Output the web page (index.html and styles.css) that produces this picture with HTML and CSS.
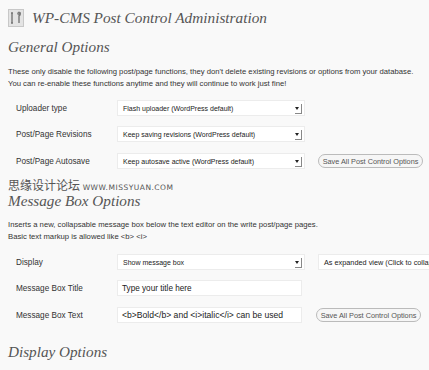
FILE: index.html
```html
<!DOCTYPE html>
<html>
<head>
<meta charset="utf-8">
<link rel="stylesheet" href="styles.css">
</head>
<body>
<div class="page">
  <div class="title-row">
    <span class="icon"><svg width="16" height="18" viewBox="0 0 16 18"><rect x="0.5" y="0.5" width="15" height="17" fill="#e4e4e4" stroke="#c8c8c8"/><path d="M4 4 L4 14 M3 4 L5 4 M3 14 L5 14" stroke="#777" stroke-width="1.4" fill="none"/><path d="M10 4 L12 4 L12 6 L11 7 L11 14" stroke="#777" stroke-width="1.4" fill="none"/><circle cx="11" cy="4.5" r="1.4" fill="none" stroke="#777"/></svg></span>
    <h1 class="title">WP-CMS Post Control Administration</h1>
  </div>

  <h2 class="section">General Options</h2>
  <p class="desc">These only disable the following post/page functions, they don't delete existing revisions or options from your database.<br>You can re-enable these functions anytime and they will continue to work just fine!</p>

  <div class="form">
    <div class="row">
      <span class="label">Uploader type</span>
      <span class="select">Flash uploader (WordPress default)<i class="arrow"></i></span>
    </div>
    <div class="row">
      <span class="label">Post/Page Revisions</span>
      <span class="select">Keep saving revisions (WordPress default)<i class="arrow"></i></span>
    </div>
    <div class="row">
      <span class="label">Post/Page Autosave</span>
      <span class="select">Keep autosave active (WordPress default)<i class="arrow"></i></span>
      <span class="button">Save All Post Control Options</span>
    </div>
  </div>

  <div class="watermark">思缘设计论坛 <span class="wm-url">WWW.MISSYUAN.COM</span></div>
  <h2 class="section section-mb">Message Box Options</h2>
  <p class="desc desc-mb">Inserts a new, collapsable message box below the text editor on the write post/page pages.<br>Basic text markup is allowed like &lt;b&gt; &lt;i&gt;</p>

  <div class="form form-mb">
    <div class="row">
      <span class="label">Display</span>
      <span class="select">Show message box<i class="arrow"></i></span>
      <span class="select select2">As expanded view (Click to collapse)</span>
    </div>
    <div class="row">
      <span class="label">Message Box Title</span>
      <span class="input">Type your title here</span>
    </div>
    <div class="row">
      <span class="label">Message Box Text</span>
      <span class="input input-code">&lt;b&gt;Bold&lt;/b&gt; and &lt;i&gt;italic&lt;/i&gt; can be used</span>
      <span class="button">Save All Post Control Options</span>
    </div>
  </div>

  <h2 class="section section-do">Display Options</h2>
</div>
</body>
</html>
```

FILE: styles.css
```css
html, body {
  margin: 0;
  padding: 0;
  background: #f9f9f9;
}
body {
  width: 429px;
  height: 370px;
  overflow: hidden;
  font-family: "Liberation Sans", Arial, sans-serif;
  color: #333;
}
.page {
  padding: 8px 0 0 8px;
  white-space: nowrap;
}
.title-row {
  display: flex;
  align-items: center;
  gap: 8px;
  height: 19px;
}
.icon {
  display: flex;
  width: 16px;
  height: 18px;
}
.title {
  margin: 0;
  font-family: "Liberation Serif", serif;
  font-style: italic;
  font-weight: normal;
  font-size: 15.3px;
  color: #555;
}
.section {
  margin: 11px 0 0 0;
  font-family: "Liberation Serif", serif;
  font-style: italic;
  font-weight: normal;
  font-size: 15.2px;
  line-height: 18px;
  color: #555;
}
.desc {
  margin: 10px 0 0 0;
  font-size: 7.7px;
  line-height: 12px;
  color: #333;
}
.desc-mb {
  margin-top: 9px;
}
.form {
  margin-top: 10px;
  display: flex;
  flex-direction: column;
  gap: 10px;
}
.form-mb {
  margin-top: 11px;
}
.row {
  display: flex;
  align-items: center;
  height: 16px;
  padding-left: 8px;
}
.row > * {
  flex-shrink: 0;
}
.form > .row:nth-child(3) {
  margin-top: 1px;
}
.label {
  width: 101px;
  font-size: 8.2px;
  color: #333;
}
.select, .input {
  position: relative;
  box-sizing: border-box;
  width: 188px;
  height: 16px;
  display: flex;
  align-items: center;
  padding-left: 5px;
  background: #fff;
  border: 1px solid #ececec;
  font-size: 7px;
  color: #222;
}
.input {
  width: 185px;
  padding-left: 4px;
  font-size: 8.2px;
}
.input-code {
  font-size: 8.6px;
}
.arrow {
  position: absolute;
  right: 2px;
  top: 3px;
  width: 6px;
  height: 9px;
  border-right: 1px solid #888;
  border-bottom: 1px solid #888;
}
.arrow::before {
  content: "";
  position: absolute;
  left: 0;
  top: 3px;
  border-left: 2.5px solid transparent;
  border-right: 2.5px solid transparent;
  border-top: 3px solid #222;
}
.select2 {
  margin-left: 13px;
  width: 130px;
  font-size: 7.3px;
}
.button {
  box-sizing: border-box;
  margin-left: 13px;
  height: 14px;
  width: 105px;
  justify-content: center;
  display: flex;
  align-items: center;
  border: 1px solid #bbb;
  border-radius: 8px;
  background: #f6f6f6;
  font-size: 7.3px;
  color: #555;
}
.input + .button {
  margin-left: 14px;
}
.watermark {
  margin-top: 10px;
  font-family: "Noto Sans CJK SC", sans-serif;
  font-size: 12px;
  line-height: 12px;
  color: #555;
}
.wm-url {
  font-family: "DejaVu Sans", sans-serif;
  font-size: 7.5px;
  letter-spacing: 0.5px;
}
.section-mb {
  margin-top: -2px;
}
.section-do {
  margin-top: 20px;
}
```
